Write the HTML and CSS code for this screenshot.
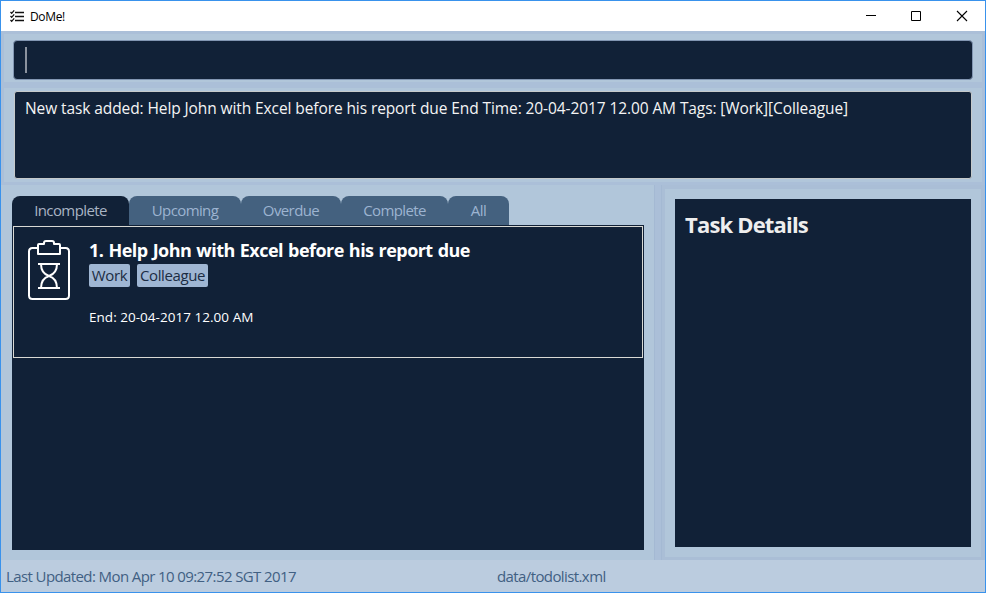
FILE: index.html
```html
<!DOCTYPE html>
<html lang="en">
<head>
<meta charset="utf-8">
<title>DoMe!</title>
<link rel="stylesheet" href="styles.css">
</head>
<body>
<div class="window">
  <header class="titlebar">
    <svg class="app-icon" width="14" height="13" viewBox="0 0 14 13" fill="none" stroke="#111" stroke-width="1.3"><path d="M5 2.5h9M5 6.5h9M5 10.5h9"/><path d="M.5 2l1.2 1.3L4.2.4M.5 6l1.2 1.3 2.5-2.9M.5 10l1.2 1.3 2.5-2.9"/></svg>
    <span class="app-name">DoMe!</span>
    <div class="controls">
      <svg width="12" height="12" viewBox="0 0 12 12"><path d="M2 5.500h10" stroke="#000"/></svg>
      <svg width="12" height="12" viewBox="0 0 12 12"><path d="M1.5 1.500h9v9h-9z" fill="none" stroke="#000"/></svg>
      <svg width="12" height="12" viewBox="0 0 12 12"><path d="M1 1l10 10M11 1L1 11" stroke="#000" stroke-width="1.1"/></svg>
    </div>
  </header>
  <section class="panel command"><div class="field"><span class="caret"></span></div></section>
  <section class="panel result"><div class="output"><span class="message">New task added: Help John with Excel before his report due End Time: 20-04-2017 12.00 AM Tags: [Work][Colleague]</span></div></section>
  <main class="split">
    <section class="tasks">
      <nav class="tabs">
        <span class="tab active w-incomplete">Incomplete</span>
        <span class="tab w-upcoming">Upcoming</span>
        <span class="tab w-overdue">Overdue</span>
        <span class="tab w-complete">Complete</span>
        <span class="tab w-all">All</span>
      </nav>
      <div class="list">
        <article class="task">
          <svg class="task-icon" width="44" height="62" viewBox="0 0 44 62" fill="none" stroke="#fff" stroke-width="2" stroke-linejoin="round"><path d="M11 9H5.500Q2 9 2 12.500V56.500Q2 60 5.500 60H38.500Q42 60 42 56.500V12.500Q42 9 38.500 9H33"/><path d="M11 15V6Q11 5 12 5H17V4Q17 2 19 2H25Q27 2 27 4V5H32Q33 5 33 6V15Z"/><path d="M11 25H33M11 49H33M14 25C14 31 16 35 22 37C28 35 30 31 30 25M14 49C14 43 16 39 22 37C28 39 30 43 30 49"/></svg>
          <div class="task-body">
            <h2 class="task-name">1. Help John with Excel before his report due</h2>
            <div class="tags"><span class="tag tag-work">Work</span><span class="tag tag-colleague">Colleague</span></div>
            <p class="end">End: 20-04-2017 12.00 AM</p>
          </div>
        </article>
      </div>
    </section>
    <div class="divider"></div>
    <section class="details-pane"><div class="details-frame"><div class="details"><h1>Task Details</h1></div></div></section>
  </main>
  <footer class="status"><span class="updated">Last Updated: Mon Apr 10 09:27:52 SGT 2017</span><span class="path">data/todolist.xml</span></footer>
</div>
</body>
</html>
```
FILE: styles.css
```css
* { box-sizing: border-box; }
body { margin: 0; font-family: "Open Sans", "Noto Sans", sans-serif; }
h1, h2, p { margin: 0; }
svg { display: block; }
.window { width: 986px; height: 593px; border: 1px solid #3992ec; background: #abbfd8; display: flex; flex-direction: column; overflow: hidden; white-space: nowrap; }
.titlebar { height: 30px; background: #fff; display: flex; align-items: center; padding: 0 17px 0 9px; flex: none; }
.app-name { font-size: 12px; letter-spacing: -.35px; margin-left: 6px; color: #000; }
.controls { display: flex; gap: 34px; margin-left: auto; }
.panel { background: #b1c6da; margin: 0 3px; flex: none; }
.command { margin-top: 3px; height: 48px; padding: 6px 9px 2px; }
.field { height: 40px; background: #112137; border: 1px solid #8296b2; border-radius: 4px; padding: 6px 11px; }
.caret { display: block; width: 2px; height: 26px; background: #8b929e; }
.result { margin-top: 6px; height: 94px; padding: 3px 10px; }
.output { height: 88px; background: #112137; border: 1px solid #c5c9ca; border-radius: 3px; padding: 5px 10px; color: #f4f4f4; font-size: 15.5px; line-height: 22px; }
.message { letter-spacing: -.095px; }
.split { margin-top: 3px; height: 375px; display: flex; flex: none; }
.tasks { width: 653px; background: #b1c6da; padding: 11px 10px 10px 11px; }
.tabs { display: flex; height: 29px; }
.tab { height: 29px; background: #44617f; color: #9db4d1; border-radius: 8px 8px 0 0; font-size: 15px; line-height: 29px; text-align: center; letter-spacing: -.6px; font-weight: 400; }
.active { background: #112137; color: #a9b4c4; }
.w-incomplete { width: 117px; }
.w-upcoming { width: 112px; }
.w-overdue { width: 100px; }
.w-complete { width: 107px; }
.w-all { width: 61px; }
.list { height: 325px; background: #112137; padding: 1px; }
.task { height: 132px; border: 1px solid #d9d9d4; display: flex; padding: 12px 0 0 13px; }
.task-icon { flex: none; }
.task-body { margin-left: 18px; }
.task-name { color: #fff; font-size: 18px; line-height: 22px; padding-bottom: 3px; font-weight: 700; letter-spacing: -.55px; word-spacing: 1px; }
.tags { display: flex; gap: 7px; }
.tag { height: 23px; border-radius: 2px; background: #9fb6d3; color: #1b2c43; font-size: 15px; line-height: 23px; text-align: center; letter-spacing: -.4px; }
.tag-work { width: 41px; }
.tag-colleague { width: 71px; }
.end { color: #fff; font-size: 13.5px; line-height: 20px; margin-top: 20px; letter-spacing: .03px; }
.divider { width: 7px; background: #abbfd8; border-left: 1px solid #a4b9d3; }
.details-pane { flex: 1; background: #aabed6; padding: 4px 4px 3px 3px; border-left: 1px solid #a4b9d3; }
.details-frame { height: 368px; padding: 10px; background: #b1c6da; }
.details { height: 348px; background: #112137; padding: 9px 10px; color: #eee; }
.details h1 { font-size: 22px; line-height: 32px; font-weight: 700; letter-spacing: -.82px; }
.status { flex: 1; background: #bbccdf; display: flex; color: #416083; font-size: 15px; line-height: 32px; padding-left: 5px; font-weight: 400; letter-spacing: -.6px; }
.updated { width: 491px; }
```
